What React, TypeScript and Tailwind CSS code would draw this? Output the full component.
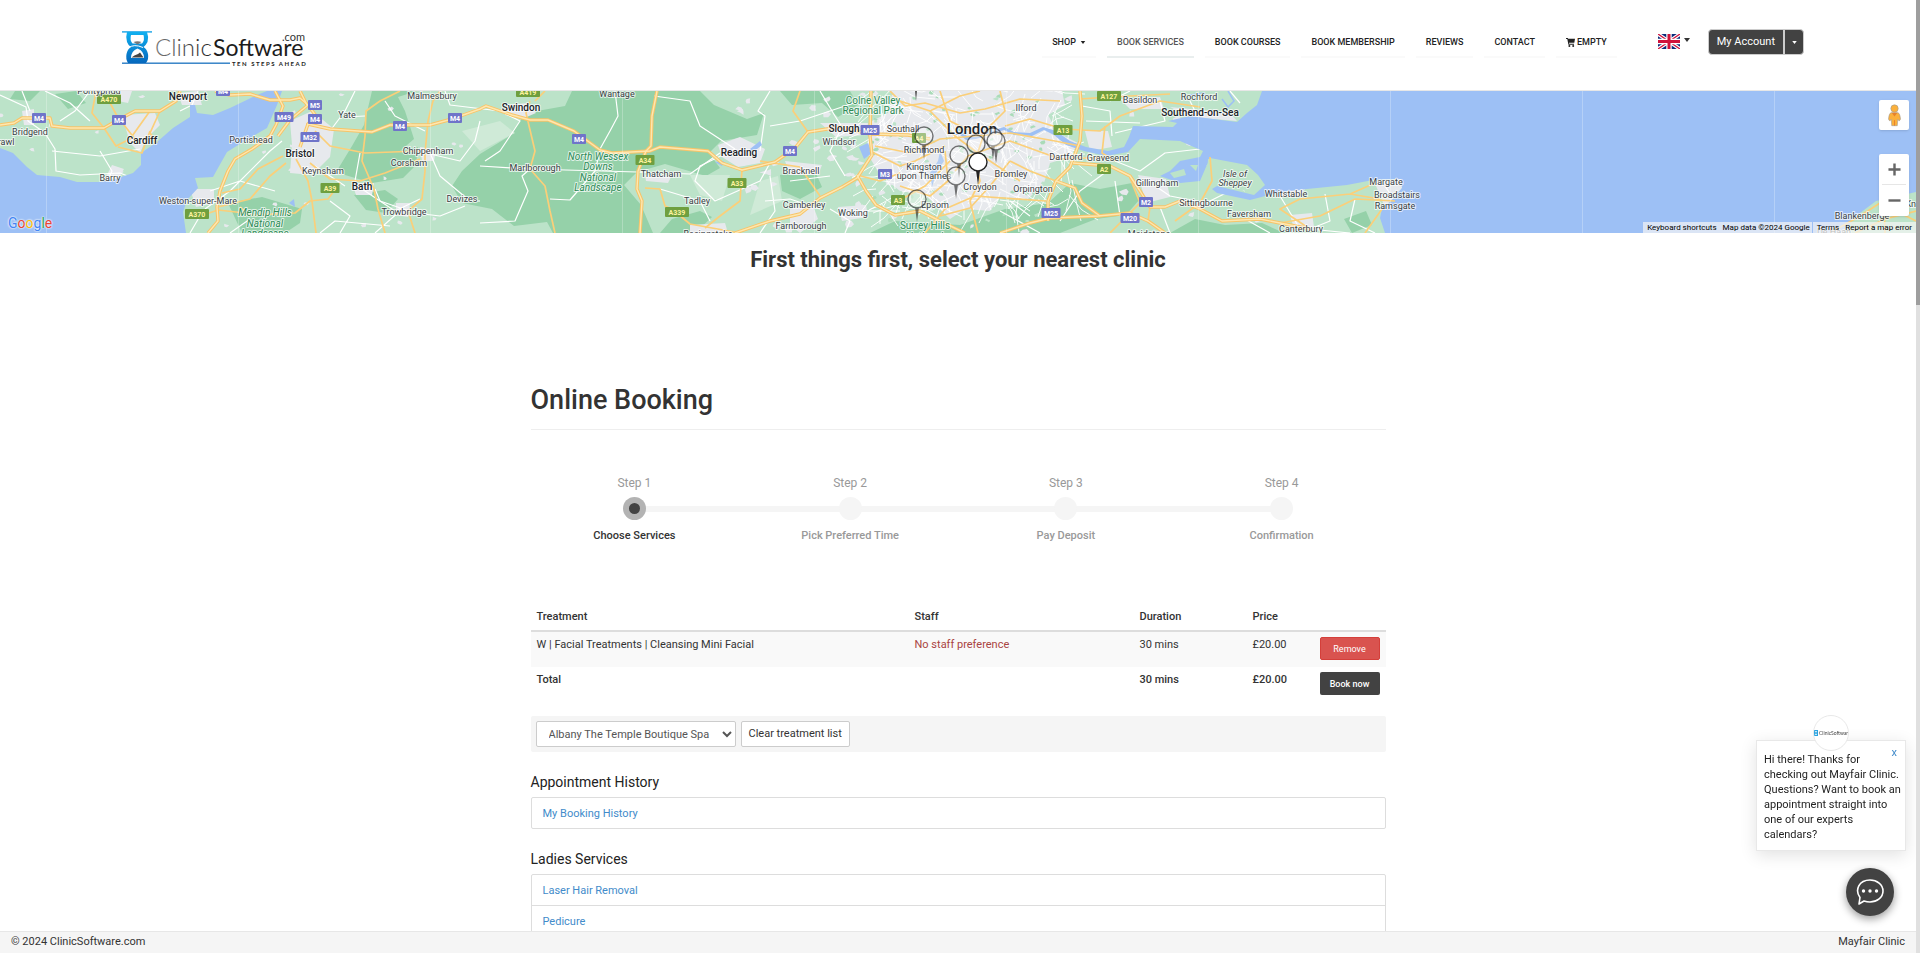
import React from 'react';

const navItems = [
  { label: 'SHOP', caret: true },
  { label: 'BOOK SERVICES', active: true },
  { label: 'BOOK COURSES' },
  { label: 'BOOK MEMBERSHIP' },
  { label: 'REVIEWS' },
  { label: 'CONTACT' },
  { label: 'EMPTY', cart: true },
];

const steps = [
  { step: 'Step 1', name: 'Choose Services', active: true },
  { step: 'Step 2', name: 'Pick Preferred Time', active: false },
  { step: 'Step 3', name: 'Pay Deposit', active: false },
  { step: 'Step 4', name: 'Confirmation', active: false },
];

const towns: [string, number, number][] = [
  ['Bridgend', 30, 43], ['rawl', 6, 53], ['Barry', 110, 89], ['Portishead', 251, 51], ['Yate', 347, 26],
  ['Malmesbury', 432, 7], ['Chippenham', 428, 62], ['Corsham', 409, 74], ['Keynsham', 323, 82],
  ['Weston-super-Mare', 198, 112], ['Trowbridge', 404, 123], ['Devizes', 462, 110],
  ['Wantage', 617, 5], ['Marlborough', 535, 79], ['Thatcham', 661, 85], ['Tadley', 697, 112],
  ['Basingstoke', 708, 145], ['Bracknell', 801, 82], ['Camberley', 804, 116], ['Farnborough', 801, 137],
  ['Woking', 853, 124], ['Windsor', 839, 53], ['Southall', 903, 40], ['Richmond', 924, 61],
  ['Kingston', 924, 78], ['upon Thames', 924, 87], ['Epsom', 935, 116], ['Ilford', 1026, 19],
  ['Croydon', 980, 98], ['Bromley', 1011, 85], ['Orpington', 1033, 100], ['Dartford', 1066, 68],
  ['Gravesend', 1108, 69], ['Basildon', 1140, 11], ['Rochford', 1199, 8], ['Gillingham', 1157, 94],
  ['Sittingbourne', 1206, 114], ['Faversham', 1249, 125], ['Whitstable', 1286, 105],
  ['Canterbury', 1301, 140], ['Maidstone', 1149, 145], ['Margate', 1386, 93], ['Broadstairs', 1397, 106],
  ['Ramsgate', 1395, 117], ['Blankenberge', 1862, 127], ['Knokke-Heist', 1932, 115], ['De Haan', 1834, 143], ['Pontypridd', 99, 2],
];

const cities: [string, number, number][] = [
  ['Newport', 188, 8], ['Cardiff', 142, 52], ['Bristol', 300, 65], ['Bath', 362, 98], ['Swindon', 521, 19],
  ['Reading', 739, 64], ['Slough', 844, 40], ['Southend-on-Sea', 1200, 24],
];

const parks: [string, number, number][] = [
  ['Mendip Hills', 265, 125], ['National', 265, 136], ['Landscape', 265, 146],
  ['North Wessex', 598, 69], ['Downs', 598, 79], ['National', 598, 90], ['Landscape', 598, 100],
];

const uprightParks: [string, number, number][] = [
  ['Colne Valley', 873, 13], ['Regional Park', 873, 23], ['Surrey Hills', 925, 138], ['National', 925, 149],
];

const motorways: [string, number, number][] = [
  ['M4', 39, 27], ['M4', 119, 29], ['M4', 223, 0], ['M5', 315, 14], ['M49', 284, 26], ['M4', 315, 28],
  ['M32', 310, 46], ['M4', 400, 35], ['M4', 455, 27], ['M4', 579, 48], ['M4', 790, 60], ['M25', 870, 39],
  ['M3', 885, 83], ['M25', 1051, 122], ['M20', 1130, 127], ['M2', 1146, 111],
];

const aRoads: [string, number, number][] = [
  ['A470', 109, 8], ['A39', 330, 97], ['A370', 197, 123], ['A419', 528, 1], ['A34', 645, 69], ['A33', 737, 92],
  ['A339', 677, 121], ['A4', 919, 47], ['A3', 898, 109], ['A127', 1109, 5], ['A13', 1063, 39], ['A2', 1104, 78],
];

const mainRoads = [
  'M0 34 L14 32 L22 27 L50 27 L52 35 L70 37 L104 37 L118 29 L135 20 L160 20 L176 10 L180 0',
  'M215 0 L230 4 L250 3 L270 9 L290 9 L300 7 L308 14 L316 25 L308 33 L330 38 L372 41 L390 34 L402 34 L430 34 L452 28 L480 18 L486 15 L512 24 L530 29 L548 29 L574 40 L600 59 L612 62 L650 60 L660 56 L708 60 L722 72 L742 79 L775 71 L795 57 L808 41 L840 36 L870 43 L908 44 L930 48',
  'M275 0 L283 15 L276 34 L270 45 L252 58 L235 68 L228 80 L220 100 L217 116 L218 130 L208 142',
  'M308 14 L290 29 L278 45 M308 33 L300 56 M300 0 L307 14',
  'M735 142 L770 130 L800 123 L820 107 L842 96 L857 87 L872 64 L870 45 L871 0',
  'M857 84 L866 100 L876 114 L895 124 L920 120 L940 130 L965 142 M1000 142 L1030 132 L1050 127 L1098 125 L1130 122 L1148 130 L1165 142',
  'M1080 0 L1082 25 L1080 50 L1070 76 L1056 90 L1048 110 L1048 130 M1056 90 L1075 97 L1082 112 L1100 125',
  'M1073 72 L1110 75 L1130 85 L1140 100 L1150 116 L1165 116 L1180 110 L1200 118 L1222 130 L1260 128 L1280 132 L1310 138',
  'M657 0 L652 25 L651 55 L646 60 L638 80 L637 98 L642 110 L640 142',
];

const yellowRoads = [
  'M104 37 L116 55 L130 48 L150 20 M118 56 L142 62 L150 40 M109 10 L117 25 L135 48',
  'M104 37 L92 22 L96 0 M160 20 L150 42 L157 52',
  'M415 142 L408 120 L422 108 L425 80 L425 62 L428 30 L433 10 L440 0 M365 45 L362 70 L374 98 L378 118 L385 142 M365 45 L366 20 L380 10 L400 0',
  'M315 40 L330 55 L365 62 L420 60 M296 68 L308 90 L312 110 L316 142 M283 65 L258 78 L240 98 L222 102 M286 72 L270 85 L250 108 L218 116 M310 72 L330 88 L360 90 L385 82 L420 68',
  'M535 10 L540 5 L545 0 M530 10 L526 22 L535 60 L530 78 L545 95 L550 120 L555 142',
  'M645 97 L660 98 L665 115 L672 118 L690 133 L740 142 M742 79 L740 110 L720 125 L705 137 M800 0 L793 20 L808 41 M760 70 L800 76 L820 105 M857 84 L880 90 L900 82',
  'M900 10 L930 20 L955 45 L975 60 L1020 90 M875 55 L910 62 L940 48 L1010 42 L1055 50 L1080 55 M940 0 L950 30 L980 45 M870 60 L900 75 L915 70 L945 55',
  'M1000 0 L1005 20 L985 40 L975 70 L980 90 L970 110 L978 142 M955 80 L968 65 L1010 50 L1060 68 L1110 66 M895 112 L925 95 L950 70 M925 142 L945 118 L975 105 L1046 110',
  'M1005 35 L1030 28 L1063 38 L1100 40 L1120 25 L1160 10 L1200 16 M1080 8 L1110 6 L1170 3 M1105 35 L1102 62 L1115 70 M1150 116 L1148 130 M1110 142 L1140 112 L1130 87',
  'M1210 66 L1212 90 L1200 112 L1175 130 M1310 138 L1280 118 L1300 108 L1350 103 L1375 92 M1280 132 L1320 125 L1355 108 L1395 110 M1350 103 L1380 108 M1365 142 L1382 118',
  'M1830 142 L1860 125 L1880 112 L1916 130 M1855 142 L1885 128 L1916 120 M1884 112 L1885 142',
  'M240 116 L250 124 L295 122 L310 110 L328 108 L340 92 M200 125 L218 119 L245 122',
  'M940 125 L970 117 L990 95 L1010 70 M900 95 L930 105 L948 90 L945 60',
  'M890 0 L905 15 L925 12 L960 22 L985 18 L1020 8 L1060 10 M930 20 L960 5 L980 0 M1010 70 L1030 80 L1056 90',
];

const minorRoads = [
  'M0 4 L26 16 L28 30 L45 42 L55 58 L56 80 L80 84 L120 82 L135 88 M52 60 L100 65 L140 58 M22 0 L30 20 M60 30 L75 20 L90 0 M45 0 L70 12 L90 30 M100 60 L112 80 L105 95',
  'M180 20 L192 14 L198 0 M330 40 L345 20 L355 0 M345 26 L365 25 M360 62 L355 90 L362 98 L395 120 L420 108 M400 120 L375 142 M315 75 L345 95 M430 63 L460 70 L475 50 L480 30 M430 62 L440 85 L470 110 L480 110',
  'M385 10 L395 25 L425 40 M445 0 L450 14 L500 20 L520 30 L500 60 L485 70 M465 115 L440 125 L415 122 L380 110 L375 98 M480 132 L515 130 L528 100 L522 85 L530 78 M530 78 L637 81 L690 83 L720 62 M480 75 L530 78',
  'M550 108 L570 109 L595 80 L600 60 M615 0 L618 25 L610 40 L600 58 M654 5 L690 10 L700 35 L735 58 M760 60 L765 25 L758 20 L770 0 M735 58 L700 75 L695 90 L715 110 L760 90 L770 72 M660 98 L700 110 L710 130',
  'M765 110 L790 108 L820 118 M840 40 L830 60 L845 85 M770 35 L800 30 L860 10 M770 85 L775 120 L760 142 M830 118 L850 130 L845 142 M852 120 L900 120 M820 0 L835 25 L842 36 M790 90 L830 85',
  'M1082 15 L1110 20 L1112 45 M1110 10 L1130 0 M1160 10 L1165 30 L1115 42 M1190 10 L1200 30 M1115 70 L1140 80 L1165 62 L1200 58 M1148 90 L1170 105 L1206 112 M1110 78 L1080 100 L1060 130 M1115 90 L1120 125 M1160 116 L1170 142 M1206 112 L1230 100 M1215 80 L1245 100',
  'M1280 105 L1300 138 M1325 103 L1330 130 L1310 138 L1350 142 M1355 108 L1350 130 L1375 142 M1245 128 L1270 142 M1385 95 L1395 110 M1000 120 L1040 142 M1010 110 L1030 125 M1086 30 L1140 32 M1230 0 L1240 12',
  'M190 142 L200 125 M230 142 L250 128 M205 118 L230 100 L270 60 L282 50 M210 100 L240 90 L275 100 M340 142 L350 125 L330 110 M320 142 L335 130 L390 135',
];

function makeRandom(start: number) {
  let seed = start;
  return () => {
    seed = (seed * 16807) % 2147483647;
    return seed / 2147483647;
  };
}

function londonStreets(): string {
  const rand = makeRandom(41);
  const parts: string[] = [];
  for (let i = 0; i < 210; i += 1) {
    const x = 868 + rand() * 205;
    const y = rand() * 125 - 8;
    const angle = rand() * Math.PI;
    const bend = angle + (rand() - 0.5);
    const length = 7 + rand() * 14;
    const mx = x + Math.cos(angle) * length;
    const my = y + Math.sin(angle) * length;
    parts.push(
      `M${Math.round(x)} ${Math.round(y)} L${Math.round(mx)} ${Math.round(my)} L${Math.round(mx + Math.cos(bend) * length)} ${Math.round(my + Math.sin(bend) * length)}`,
    );
  }
  return parts.join(' ');
}

function patches(count: number, start: number, left: number, width: number, size: number): string {
  const rand = makeRandom(start);
  const parts: string[] = [];
  for (let i = 0; i < count; i += 1) {
    const cx = left + rand() * width;
    const cy = rand() * 142;
    const points = [0, 1, 2, 3, 4, 5].map((k) => {
      const r = size * (0.4 + rand());
      const angle = (k * Math.PI) / 3;
      return `${(cx + Math.cos(angle) * r * 1.3).toFixed(1)} ${(cy + Math.sin(angle) * r).toFixed(1)}`;
    });
    parts.push(`M${points.join(' L')} Z`);
  }
  return parts.join(' ');
}

function Pin({ x, y, faded }: { x: number; y: number; faded?: boolean }) {
  return (
    <g opacity={faded ? 0.6 : 1}>
      <path d={`M${x - 2} ${y + 8} L${x} ${y + 23} L${x + 2} ${y + 8} Z`} fill="#222" />
      <circle cx={x} cy={y} r="9" fill="#fff" fillOpacity={faded ? 0.6 : 1} stroke="#222" strokeWidth="1.4" />
    </g>
  );
}

function Shield({ label, x, y, kind }: { label: string; x: number; y: number; kind: 'm' | 'a' }) {
  const width = label.length * 5 + 4;
  return (
    <g>
      <rect x={x - width / 2} y={y - 5} width={width} height="10" rx="1" fill={kind === 'm' ? '#6f74c9' : '#6f9f3f'} />
      <text x={x} y={y + 3} textAnchor="middle" fontSize="7" fontWeight="700" fill={kind === 'm' ? '#fff' : '#fdf3a0'}>
        {label}
      </text>
    </g>
  );
}

function MapView() {
  return (
    <svg
      viewBox="0 0 1916 142"
      preserveAspectRatio="xMidYMid slice"
      className="block h-full w-full font-[Roboto,sans-serif]"
      role="img"
      aria-label="Map of clinics"
    >
      <rect width="1916" height="142" fill="#bce3c9" />
      <g fill="#95d1a9">
        <path d="M372 0 L417 0 L398 6 L405 20 L414 48 L400 60 L418 56 L416 74 L403 87 L372 92 L345 84 L338 78 L352 55 L364 34 Z" />
        <path d="M354 104 L385 99 L398 108 L386 122 L366 119 Z" />
        <path d="M228 112 L262 106 L302 118 L300 132 L285 142 L242 142 Z" />
        <path d="M462 80 L480 63 L508 46 L526 22 L565 15 L572 0 L700 0 L714 14 L747 28 L764 22 L757 44 L721 50 L709 62 L720 77 L706 85 L665 73 L637 81 L624 94 L641 114 L653 142 L553 142 L547 131 L514 135 L492 118 L462 112 L452 95 Z" />
        <path d="M780 0 L850 0 L858 14 L838 26 L822 12 L792 14 Z M780 84 L815 80 L822 96 L800 108 L782 100 Z" />
        <path d="M870 142 L895 130 L960 134 L1005 118 L1048 112 L1070 92 L1100 98 L1132 92 L1140 108 L1126 124 L1096 128 L1060 142 Z" />
        <path d="M1170 142 L1195 128 L1225 134 L1262 132 L1284 142 Z M1344 128 L1366 120 L1372 134 L1352 142 Z" />
        <path d="M660 142 L672 128 L700 120 L712 126 L695 142 Z M15 0 L40 0 L30 10 L10 8 Z M55 3 L76 0 L86 12 L68 18 Z" />
      </g>
      <g fill="#cfead7">
        <path d="M462 40 L500 30 L515 42 L480 60 Z M760 90 L778 85 L782 110 L750 124 Z M690 84 L730 84 L722 110 L700 104 Z M1090 50 L1098 70 L1086 72 Z" />
      </g>
      <g fill="#e7e9ed">
        <path d="M895 0 L1062 0 L1065 14 L1048 24 L1058 42 L1078 52 L1070 66 L1050 72 L1044 92 L1028 108 L1000 106 L990 120 L965 118 L950 128 L925 104 L900 100 L880 84 L866 60 L872 30 L888 22 Z" />
        <path d="M122 24 L155 22 L160 34 L146 48 L140 62 L130 52 L126 38 Z M290 30 L312 20 L334 38 L330 66 L312 84 L290 82 L292 54 Z M190 98 L214 98 L214 112 L196 116 Z" />
        <path d="M505 14 L528 12 L536 22 L522 28 L505 24 Z M718 54 L740 46 L765 58 L760 72 L738 76 L722 66 Z M820 32 L868 32 L866 44 L836 46 Z M785 70 L822 74 L818 84 L790 84 Z" />
        <path d="M1085 40 L1108 40 L1112 56 L1090 60 Z M1120 8 L1160 6 L1164 18 L1130 18 Z M1170 16 L1230 22 L1237 30 L1190 26 Z M1138 84 L1166 88 L1170 106 L1146 112 Z M1280 100 L1305 98 L1300 106 L1280 106 Z M1290 124 L1312 122 L1314 136 L1294 138 Z M1374 90 L1401 88 L1402 97 L1392 110 L1384 114 Z" />
        <path d="M22 20 L34 18 L34 34 L24 34 Z M112 74 L124 78 L118 88 L104 90 Z M352 92 L374 92 L372 104 L356 104 Z M396 112 L410 112 L408 126 L396 124 Z M420 56 L436 58 L434 70 L422 70 Z M120 0 L132 0 L128 12 L118 10 Z M178 2 L198 0 L202 14 L182 14 Z" />
        <path d="M790 118 L812 112 L818 128 L800 142 L790 134 Z M838 116 L866 114 L868 126 L842 130 Z M690 134 L725 132 L728 142 L690 142 Z M645 84 L672 84 L668 92 L646 90 Z" />
        <path d={patches(45, 977, 740, 650, 3)} />
        <path d={patches(30, 313, 0, 470, 2)} />
        <path d={patches(30, 77, 740, 160, 3)} />
      </g>
      <path d={patches(55, 555, 872, 180, 2)} fill="#a9dbb8" />
      <path d={patches(35, 1234, 860, 200, 2)} fill="#bce3c9" />
      <g fill="none" stroke="#fff" strokeWidth="1.2" strokeLinejoin="round">
        {minorRoads.map((d) => (
          <path key={d} d={d} />
        ))}
        <path d={londonStreets()} strokeWidth="0.9" />
      </g>
      <g fill="#9dc0f5">
        <path d="M0 57 L13 62 L27 76 L37 84 L60 86 L77 91 L100 91 L115 88 L133 82 L141 74 L141 62 L157 51 L173 37 L190 26 L190 14 L195 14 L197 22 L213 24 L230 17 L257 4 L267 0 L282 0 L277 14 L267 37 L243 51 L227 61 L218 77 L213 86 L195 87 L198 97 L187 109 L183 121 L186 142 L0 142 Z" />
        <path d="M1262 0 L1257 14 L1247 22 L1237 31 L1213 28 L1190 25 L1168 30 L1177 32 L1173 36 L1133 35 L1129 46 L1124 56 L1108 60 L1086 56 L1070 50 L1056 40 L1043 36 L1030 42 L1014 41 L1004 36 L1004 39 L1014 44 L1032 45 L1044 39 L1054 44 L1066 54 L1084 60 L1106 65 L1128 61 L1140 48 L1180 50 L1203 60 L1200 66 L1180 70 L1170 80 L1160 85 L1180 92 L1200 90 L1206 76 L1210 67 L1247 74 L1258 84 L1265 94 L1254 104 L1217 95 L1212 98 L1217 102 L1250 109 L1280 101 L1307 98 L1347 94 L1373 89 L1401 88 L1402 97 L1390 111 L1382 117 L1380 127 L1385 142 L1841 142 L1860 122 L1876 110 L1916 101 L1916 0 Z" />
        <path d="M859 56 L868 52 L872 62 L864 68 Z M750 58 L760 50 L762 54 L752 62 Z M715 71 L724 70 L722 75 Z M289 112 L294 108 L295 116 Z M954 44 L962 40 L968 46 L980 44 L992 40 L1004 36 L1004 39 L988 44 L976 48 L966 49 L960 44 Z" />
        <path d="M940 60 L944 70 L936 82 L932 96 L930 82 L938 70 Z" opacity="0.7" />
      </g>
      <path d="M1190 4 L1204 2 L1206 6 M1228 0 L1234 10 L1228 16 L1222 8" fill="none" stroke="#9dc0f5" strokeWidth="1.5" />
      <g fill="#bce3c9">
        <path d="M1170 82 L1184 78 L1186 84 L1174 87 Z M1190 74 L1198 74 L1196 80 Z M1208 68 L1246 75 L1256 84 L1263 94 L1253 102 L1218 93 L1207 90 Z" />
      </g>
      <g fill="none" strokeLinejoin="round">
        {yellowRoads.map((d) => (
          <path key={d} d={d} stroke="#fbcf79" strokeWidth="1.7" />
        ))}
        {mainRoads.map((d) => (
          <path key={d} d={d} stroke="#f8c468" strokeWidth="3.4" />
        ))}
        {mainRoads.map((d) => (
          <path key={d} d={d} stroke="#fde7b0" strokeWidth="1.4" />
        ))}
      </g>
      <g stroke="#fff" strokeOpacity="0.25">
        <path d="M46.500 0V142M238.500 0V142M430.500 0V142M622.500 0V142M814.500 0V142M1006.500 0V142M1198.500 0V142M1390.500 0V142M1582.500 0V142M1774.500 0V142" />
      </g>
      {motorways.map(([label, x, y], i) => (
        <Shield key={i} label={label} x={x} y={y} kind="m" />
      ))}
      {aRoads.map(([label, x, y], i) => (
        <Shield key={i} label={label} x={x} y={y} kind="a" />
      ))}
      <g textAnchor="middle" stroke="#fff" strokeOpacity="0.7" strokeWidth="2" strokeLinejoin="round" style={{ paintOrder: 'stroke' }}>
        <g fontSize="9" fill="#3a3f45">
          {towns.map(([label, x, y]) => (
            <text key={label} x={x} y={y + 1}>{label}</text>
          ))}
        </g>
        <g fontSize="10" fontWeight="500" fill="#202327">
          {cities.map(([label, x, y]) => (
            <text key={label} x={x} y={y + 1}>{label}</text>
          ))}
          <text x="972" y="43" fontSize="15">London</text>
        </g>
        <g fontSize="10" fill="#2e8b57">
          {parks.map(([label, x, y], i) => (
            <text key={i} x={x} y={y} fontStyle="italic">{label}</text>
          ))}
          {uprightParks.map(([label, x, y], i) => (
            <text key={i} x={x} y={y}>{label}</text>
          ))}
        </g>
        <g fontSize="9" fontStyle="italic" fill="#3a3f45">
          <text x="1235" y="86">Isle of</text>
          <text x="1235" y="95">Sheppey</text>
        </g>
      </g>
      <path d="M915 0 L916 10 L917 0 Z" fill="#555" />
      <Pin x={924} y={45} faded />
      <Pin x={993} y={46} faded />
      <Pin x={996} y={50} faded />
      <Pin x={976} y={53} faded />
      <Pin x={959} y={64} faded />
      <Pin x={956} y={85} faded />
      <Pin x={917} y={108} faded />
      <Pin x={978} y={71} />
    </svg>
  );
}

function Logo() {
  return (
    <svg viewBox="0 0 186 36" className="h-9 w-[186px]" role="img" aria-label="ClinicSoftware.com, ten steps ahead">
      <defs>
        <linearGradient id="glass" x1="0" y1="0" x2="0" y2="1">
          <stop offset="0" stopColor="#0fb0f0" />
          <stop offset="1" stopColor="#0668bd" />
        </linearGradient>
        <linearGradient id="word" x1="0" y1="0" x2="1" y2="0">
          <stop offset="0" stopColor="#777" />
          <stop offset="1" stopColor="#222" />
        </linearGradient>
      </defs>
      <rect x="0" y="0.200" width="30" height="1.400" fill="#19a4e6" />
      <rect x="0" y="31.500" width="108" height="1.400" fill="#2b7cc4" />
      <path d="M5 1 H25 Q27 6 25.500 11 Q24 14 21.500 16 Q25 18 26 23 Q27 28 24 32 H6 Q3.500 28 4.500 23 Q5.500 18 9 16 Q6 14 5 11 Q3.500 6 5 1 Z" fill="url(#glass)" />
      <path d="M9 4 H21.500 Q23 9 20 12.500 H10.500 Q7.500 9 9 4 Z" fill="#fff" />
      <path d="M11.500 11 Q15.500 9.500 19.500 11 L15.500 13.500 Z" fill="#777" />
      <path d="M15.500 17.500 Q22 20 22 27 H9 Q9 20 15.500 17.500 Z" fill="#fff" />
      <path d="M9.500 26.500 Q12 24 16 23 L18 21.500 L21.500 26.500 Z" fill="#444" />
      <path d="M6 17 Q12 12.500 21 16.500" stroke="#fff" strokeWidth="1" fill="none" />
      <text x="33" y="25" fontFamily="Lato, sans-serif" fontSize="24" fontWeight="300" fill="url(#word)">Clinic</text>
      <text x="91" y="25" fontFamily="Lato, sans-serif" fontSize="23" fontWeight="400" fill="#1c1c1c">Software</text>
      <text x="183" y="10" textAnchor="end" fontFamily="Lato, sans-serif" fontSize="11" fill="#333">.com</text>
      <text x="110" y="35" fontFamily="Lato, sans-serif" fontSize="6" fontWeight="700" letterSpacing="1.5" fill="#222">TEN STEPS AHEAD</text>
    </svg>
  );
}

function UnionJack() {
  return (
    <svg viewBox="0 0 22 15" className="h-[15px] w-[22px]" role="img" aria-label="English">
      <rect width="22" height="15" fill="#0b2a7a" />
      <path d="M0 0 L22 15 M22 0 L0 15" stroke="#fff" strokeWidth="3.600" />
      <path d="M0 0 L22 15 M22 0 L0 15" stroke="#d0103a" strokeWidth="1.300" />
      <path d="M11 0 V15 M0 7.500 H22" stroke="#fff" strokeWidth="5.400" />
      <path d="M11 0 V15 M0 7.500 H22" stroke="#d0103a" strokeWidth="3" />
    </svg>
  );
}

function Caret({ className }: { className: string }) {
  return (
    <svg viewBox="0 0 6 4" className={className} aria-hidden="true">
      <path d="M0 0 H6 L3 4 Z" fill="currentColor" />
    </svg>
  );
}

function CartIcon() {
  return (
    <svg viewBox="0 0 9 9" className="h-[9px] w-[9px]" aria-hidden="true">
      <path d="M0 0 H1.800 L2.200 0.800 H9 L8.300 4.800 H3 L3.200 5.800 H8 V6.800 H2.400 L1.300 1 H0 Z" fill="currentColor" />
      <circle cx="3.400" cy="8" r="1" fill="currentColor" />
      <circle cx="7.200" cy="8" r="1" fill="currentColor" />
    </svg>
  );
}

function Header() {
  return (
    <header className="flex h-[91px] items-start justify-between border-b border-[#e7e7e7] bg-white pr-[112px] pl-[122px]">
      <a href="#home" className="mt-[31px]">
        <Logo />
      </a>
      <div className="flex items-start">
        <nav className="mt-[28px] flex gap-[11px] text-[9px] leading-[28px] font-medium text-[#222]">
          {navItems.map((item) => (
            <a
              key={item.label}
              href="#nav"
              className={`flex items-center border-b-2 px-[10px] ${item.cart ? 'gap-0.5' : 'gap-1'} ${item.active ? 'border-[#e9eeee] text-[#555]' : 'border-[#fafafa]'}`}
            >
              {item.cart && <CartIcon />}
              {item.label}
              {item.caret && <Caret className="h-[3px] w-1.5" />}
            </a>
          ))}
        </nav>
        <button type="button" className="mt-[34px] ml-[41px] flex items-start gap-1 text-[#333]">
          <UnionJack />
          <Caret className="mt-1 h-1 w-1.5" />
        </button>
        <div className="mt-[29px] ml-[18px] flex h-[26px] rounded-sm border border-[#ccc] bg-[#424242] text-white">
          <button type="button" className="px-2 text-[11px]">My Account</button>
          <button type="button" aria-label="Account menu" className="flex w-5 items-center justify-center border-l-2 border-[#ccc]">
            <Caret className="h-[3px] w-[5px]" />
          </button>
        </div>
      </div>
    </header>
  );
}

function MapSection() {
  return (
    <section className="relative h-[142px] overflow-hidden">
      <MapView />
      <div className="absolute bottom-0 left-2 text-[14px] leading-5 [text-shadow:0_0_2px_#fff,0_0_2px_#fff]">
        <span className="text-[#4285f4]">G</span>
        <span className="text-[#ea4335]">o</span>
        <span className="text-[#fbbc05]">o</span>
        <span className="text-[#4285f4]">g</span>
        <span className="text-[#34a853]">l</span>
        <span className="text-[#ea4335]">e</span>
      </div>
      <button
        type="button"
        aria-label="Street View"
        className="absolute top-[9px] right-[7px] flex h-[30px] w-[30px] items-center justify-center rounded-xs bg-white shadow"
      >
        <svg viewBox="0 0 14 24" className="h-[23px] w-[13px]" aria-hidden="true">
          <path d="M3 9 H11 Q13 10 13.500 16 L12 18 L10.500 16 L10 23 H4 L3.500 16 L2 18 L0.500 16 Q1 10 3 9 Z" fill="#fbb03b" stroke="#999" strokeWidth="0.600" />
          <circle cx="7" cy="4.500" r="4" fill="#fbb03b" stroke="#999" strokeWidth="0.600" />
          <path d="M4 9 H10 L7 13 Z" fill="#e5812d" />
          <path d="M7 17 V23" stroke="#e5812d" strokeWidth="1" />
        </svg>
      </button>
      <div className="absolute top-[63px] right-[7px] flex w-[30px] flex-col rounded-xs bg-white px-[3px] text-[#666] shadow">
        <button type="button" aria-label="Zoom in" className="flex h-[31px] items-center justify-center border-b border-[#e6e6e6]">
          <svg viewBox="0 0 14 14" className="h-[13px] w-[13px]" aria-hidden="true">
            <path d="M7 0.500 V13.500 M0.500 7 H13.500" stroke="currentColor" strokeWidth="2.600" />
          </svg>
        </button>
        <button type="button" aria-label="Zoom out" className="flex h-[31px] items-center justify-center">
          <svg viewBox="0 0 14 14" className="h-[13px] w-[13px]" aria-hidden="true">
            <path d="M0.500 7 H13.500" stroke="currentColor" strokeWidth="2.600" />
          </svg>
        </button>
      </div>
      <div className="absolute right-0 bottom-0 flex gap-px text-[8px] leading-[11px] text-black">
        <div className="flex gap-1.5 bg-[#f5f5f5]/70 pr-0.5 pl-1">
          <button type="button">Keyboard shortcuts</button>
          <span>Map data ©2024 Google</span>
        </div>
        <div className="flex gap-1.5 bg-[#f5f5f5]/70 px-1">
          <a href="#terms">Terms</a>
          <a href="#report">Report a map error</a>
        </div>
      </div>
    </section>
  );
}

function Steps() {
  return (
    <ol className="-mx-1 mt-[45px] grid grid-cols-4 text-center">
      {steps.map((s, i) => (
        <li key={s.name} className="flex flex-col items-center">
          <span className="text-[12px] leading-4 text-[#999]">{s.step}</span>
          <span className="relative mt-1.5 flex h-[23px] w-full items-center justify-center">
            {i < steps.length - 1 && <span className="absolute left-1/2 h-1.5 w-full bg-[#f5f5f5]" />}
            <span
              className={`relative flex h-[23px] w-[23px] items-center justify-center rounded-full ${s.active ? 'bg-[#b3b3b3]' : 'bg-[#f5f5f5]'}`}
            >
              {s.active && <span className="h-[11px] w-[11px] rounded-full bg-[#424242]" />}
            </span>
          </span>
          <span className={`mt-2 text-[11px] leading-4 font-medium ${s.active ? 'text-[#333]' : 'text-[#999]'}`}>{s.name}</span>
        </li>
      ))}
    </ol>
  );
}

function TreatmentTable() {
  return (
    <table className="mt-[61px] w-full table-fixed text-left align-top text-[11px] leading-4 text-[#333]">
      <colgroup>
        <col />
        <col className="w-[225px]" />
        <col className="w-[113px]" />
        <col className="w-[67px]" />
        <col className="w-[72px]" />
      </colgroup>
      <thead>
        <tr className="border-b-2 border-[#ddd]">
          <th className="h-[26px] px-1.5 pb-0.5 font-medium">Treatment</th>
          <th className="px-1.5 pb-0.5 font-medium">Staff</th>
          <th className="px-1.5 pb-0.5 font-medium">Duration</th>
          <th className="px-1.5 pb-0.5 font-medium">Price</th>
          <th className="px-1.5"><span className="sr-only">Action</span></th>
        </tr>
      </thead>
      <tbody className="align-top">
        <tr className="bg-[#f9f9f9]">
          <td className="px-1.5 pt-[5px]">W | Facial Treatments | Cleansing Mini Facial</td>
          <td className="px-1.5 pt-[5px] text-[#a94442]">No staff preference</td>
          <td className="px-1.5 pt-[5px]">30 mins</td>
          <td className="px-1.5 pt-[5px]">£20.00</td>
          <td className="px-1.5 pt-[5px] pb-[7px]">
            <button type="button" className="block h-[23px] w-full rounded-xs border border-[#d43f3a] bg-[#d9534f] text-[9px] text-white">
              Remove
            </button>
          </td>
        </tr>
        <tr className="font-medium">
          <td className="px-1.5 pt-[5px]">Total</td>
          <td />
          <td className="px-1.5 pt-[5px]">30 mins</td>
          <td className="px-1.5 pt-[5px]">£20.00</td>
          <td className="px-1.5 pt-[5px] pb-[7px]">
            <button type="button" className="block h-[23px] w-full rounded-xs bg-[#424242] text-[9px] font-medium text-white">
              Book now
            </button>
          </td>
        </tr>
      </tbody>
    </table>
  );
}

function ServiceList({ title, items }: { title: string; items: string[] }) {
  return (
    <section className="mt-5">
      <h3 className="text-[14px] leading-5 text-[#222]">{title}</h3>
      <ul className="mt-[5px] divide-y divide-[#ddd] rounded-xs border border-[#ddd]">
        {items.map((item) => (
          <li key={item}>
            <a href="#service" className="block px-[11px] pt-0.5 text-[11px] leading-7 text-[#428bca]">{item}</a>
          </li>
        ))}
      </ul>
    </section>
  );
}

function ChatWidget() {
  return (
    <aside className="fixed right-3.5 bottom-[37px] flex w-[152px] flex-col items-end">
      <div className="relative w-[150px] border border-[#e8e8e8] bg-white pt-[11px] pb-2 pl-[7px] text-[11px] leading-[15px] text-[#222] shadow-[0_4px_16px_rgba(0,0,0,0.12)]">
        <div className="absolute -top-[26px] left-[56px] flex h-9 w-9 items-center justify-center overflow-hidden rounded-full border border-[#e8e8e8] bg-white">
          <svg viewBox="0 0 34 8" className="h-2 w-[34px]" aria-hidden="true">
            <rect x="0" y="1" width="4" height="6" fill="#2aa3e0" />
            <path d="M1 2 H3 L1 6 H3 Z" fill="#fff" />
            <text x="5" y="6" fontSize="5" fontFamily="Lato, sans-serif" fill="#444">ClinicSoftware</text>
          </svg>
        </div>
        <button type="button" aria-label="Close" className="absolute top-1 right-2 text-[11px] text-[#428bca]">x</button>
        <p className="pr-0.5">
          Hi there! Thanks for checking out Mayfair Clinic. Questions? Want to book an appointment straight into one of our experts calendars?
        </p>
      </div>
      <button
        type="button"
        aria-label="Open chat"
        className="mt-[17px] mr-3 flex h-12 w-12 items-center justify-center rounded-full bg-[#424242] text-white shadow-[0_3px_8px_rgba(0,0,0,0.4)]"
      >
        <svg viewBox="0 0 28 26" className="h-[26px] w-7" fill="none" stroke="currentColor" strokeWidth="1.600" aria-hidden="true">
          <path d="M4 18.500 C-1.500 11 3 1 14 1 C21 1 27 5.500 27 12 C27 18.500 21 23 14 23 C11.500 23 9.500 22.500 8 22 L3 25 Z" strokeLinejoin="round" />
          <g fill="currentColor" stroke="none">
            <circle cx="7.500" cy="12" r="1.700" />
            <circle cx="14" cy="12" r="1.700" />
            <circle cx="20.500" cy="12" r="1.700" />
          </g>
        </svg>
      </button>
    </aside>
  );
}

export default function App() {
  return (
    <div className="h-screen overflow-hidden bg-white pr-1 font-[Roboto,sans-serif] text-[#333]">
      <Header />
      <MapSection />
      <h2 className="mt-[13px] text-center text-[22px] leading-7 font-bold">First things first, select your nearest clinic</h2>
      <main className="mx-auto max-w-[855px]">
        <h1 className="mt-[108px] border-b border-[#eee] pb-[11px] text-[27px] leading-9 font-medium">Online Booking</h1>
        <Steps />
        <TreatmentTable />
        <form className="mt-[14px] flex gap-[5px] rounded-xs bg-[#f5f5f5] p-[5px]">
          <select
            aria-label="Clinic"
            defaultValue="albany"
            className="h-[26px] w-[200px] rounded-xs border border-[#ccc] bg-white px-2 text-[11px] text-[#555]"
          >
            <option value="albany">Albany The Temple Boutique Spa</option>
          </select>
          <button type="button" className="h-[26px] rounded-xs border border-[#ccc] bg-white px-[7px] text-[11px]">Clear treatment list</button>
        </form>
        <ServiceList title="Appointment History" items={['My Booking History']} />
        <ServiceList title="Ladies Services" items={['Laser Hair Removal', 'Pedicure']} />
      </main>
      <footer className="fixed right-1 bottom-0 left-0 flex h-[22px] items-center justify-between border-t border-[#e7e7e7] bg-[#f5f5f5] px-[11px] text-[11px]">
        <span>© 2024 ClinicSoftware.com</span>
        <span>Mayfair Clinic</span>
      </footer>
      <ChatWidget />
      <div className="fixed top-0 right-0 h-full w-1 bg-[#e0e0e0]" aria-hidden="true">
        <div className="h-[32%] bg-[#9e9e9e]" />
      </div>
    </div>
  );
}
